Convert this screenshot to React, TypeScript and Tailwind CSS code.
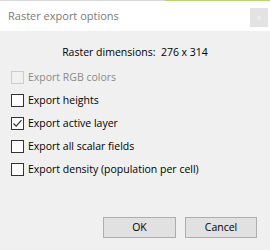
import React from "react";

const font = { fontFamily: '"Open Sans", "Noto Sans", sans-serif' };

function Box({ checked, disabled }: { checked?: boolean; disabled?: boolean }) {
  return (
    <div
      className={
        "w-[13px] h-[13px] border flex items-center justify-center shrink-0 " +
        (disabled ? "border-[#cccccc] bg-[#f0f0f0]" : "border-[#333333] bg-white")
      }
    >
      {checked && (
        <svg width="11" height="11" viewBox="0 0 11 11">
          <path d="M1.5 5.5 L4.2 8.2 L9.5 2.2" fill="none" stroke="#333333" strokeWidth="1.2" />
        </svg>
      )}
    </div>
  );
}

function Row({ label, checked, disabled }: { label: string; checked?: boolean; disabled?: boolean }) {
  return (
    <div className="h-[23px] flex items-center gap-[4px] pl-[11px]">
      <Box checked={checked} disabled={disabled} />
      <span className={"text-[10.5px] leading-none " + (disabled ? "text-[#8a8a8a]" : "text-black")}>{label}</span>
    </div>
  );
}

export default function App() {
  return (
    <div className="w-[270px] h-[250px] flex flex-col bg-[#f0f0f0] overflow-hidden" style={font}>
      <div className="h-[1px] flex">
        <div className="flex-1 bg-[#d8d8d8]" />
        <div className="w-[105px] bg-[#b6d86a]" />
      </div>
      <div className="h-[30px] bg-white flex items-center justify-between pl-[8px] pr-[2px]">
        <span className="text-[11px] text-[#7a7a7a]">Raster export options</span>
        <div className="w-[18px] h-[19px] bg-[#e3e3e3] flex items-center justify-center mt-[2px]">
          <span className="text-[9px] text-[#f4f4f4] leading-none">×</span>
        </div>
      </div>
      <div className="flex-1 flex flex-col">
        <div className="h-[22px] mt-[11px] flex items-center justify-center">
          <span className="text-[10.5px] text-black whitespace-pre">Raster dimensions:  276 x 314</span>
        </div>
        <div className="flex flex-col mt-[2px]">
          <Row label="Export RGB colors" disabled />
          <Row label="Export heights" />
          <Row label="Export active layer" checked />
          <Row label="Export all scalar fields" />
          <Row label="Export density (population per cell)" />
        </div>
        <div className="flex-1" />
        <div className="flex justify-end gap-[9px] pr-[13px] pb-[12px]">
          <button className="w-[73px] h-[21px] bg-[#e1e1e1] border border-[#adadad] text-[10.5px] text-black">OK</button>
          <button className="w-[72px] h-[21px] bg-[#e1e1e1] border border-[#adadad] text-[10.5px] text-black">Cancel</button>
        </div>
      </div>
    </div>
  );
}
